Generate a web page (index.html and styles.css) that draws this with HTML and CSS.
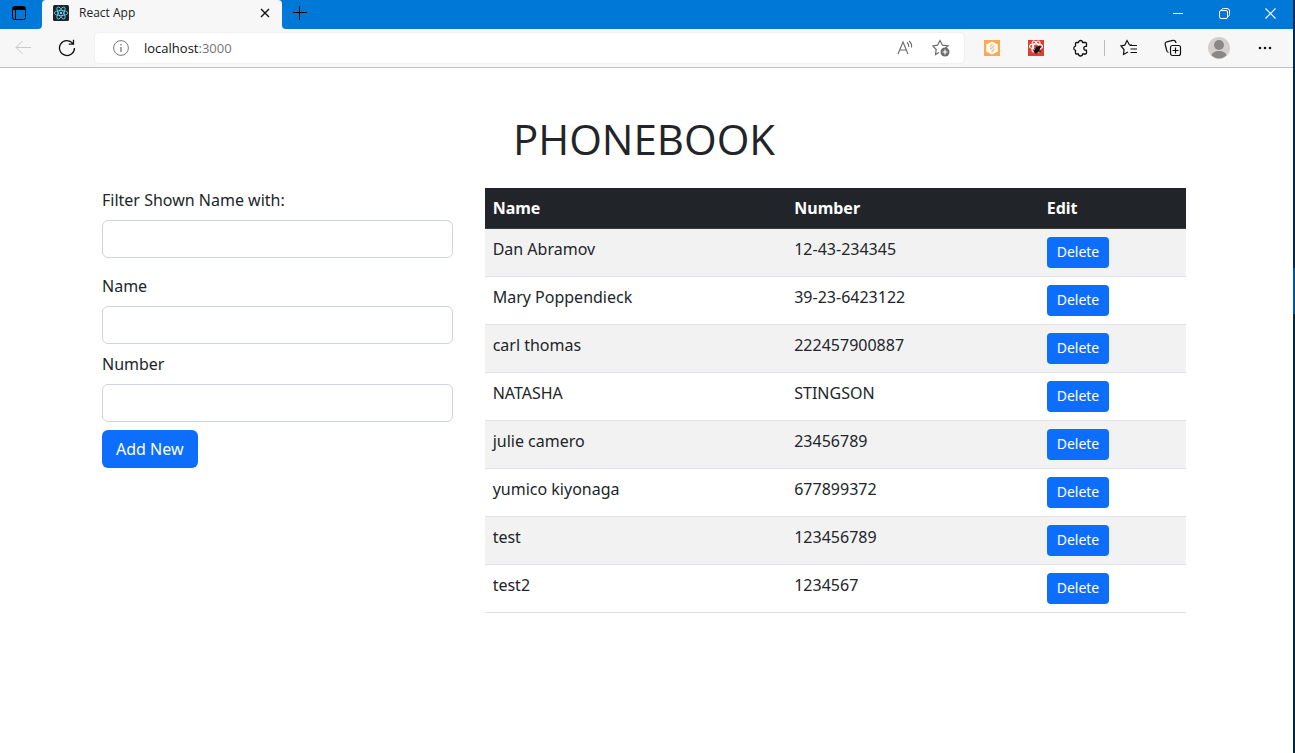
FILE: index.html
```html
<!DOCTYPE html>
<html lang="en">
<head>
<meta charset="utf-8">
<title>React App</title>
<link rel="stylesheet" href="styles.css">
</head>
<body>
<div class="window">
  <header class="titlebar">
    <button class="tab-menu" aria-label="Tab actions">
      <svg width="16" height="16" viewBox="0 0 16 16" fill="none" stroke="#000"><rect x="1.500" y="1.500" width="13" height="13" rx="2"/><path d="M1.500 4.500h13M4.500 4.500v10"/><path d="M2 3h12" stroke-width="2"/></svg>
    </button>
    <div class="tab">
      <svg width="16" height="16" viewBox="0 0 16 16" fill="none" stroke="#61dafb" stroke-width=".8"><rect width="16" height="16" rx="1.500" fill="#20232a" stroke="none"/><ellipse cx="8" cy="8" rx="6.800" ry="2.600"/><ellipse cx="8" cy="8" rx="6.800" ry="2.600" transform="rotate(60 8 8)"/><ellipse cx="8" cy="8" rx="6.800" ry="2.600" transform="rotate(120 8 8)"/><circle cx="8" cy="8" r="1.200" fill="#61dafb" stroke="none"/></svg>
      <span class="tab-title">React App</span>
      <button class="tab-close" aria-label="Close tab">
        <svg width="10" height="10" viewBox="0 0 10 10" stroke="#111" stroke-width="1.400"><path d="M1 1l8 8M9 1l-8 8"/></svg>
      </button>
    </div>
    <button class="tab-new" aria-label="New tab">
      <svg width="14" height="14" viewBox="0 0 14 14" stroke="#000"><path d="M0 6.500h14M6.500 0v14"/></svg>
    </button>
    <div class="window-controls">
      <button aria-label="Minimize"><svg width="10" height="10" viewBox="0 0 10 10" stroke="#fff"><path d="M0 5.500h10"/></svg></button>
      <button aria-label="Restore"><svg width="11" height="11" viewBox="0 0 11 11" fill="none" stroke="#fff"><rect x=".5" y="2.500" width="8" height="8" rx="1.500"/><path d="M2.500 2.500v-.5q.3-1.500 2-1.500h3.500q2.500 0 2.500 2.500v3.500q0 1.700-1.500 2h-.5"/></svg></button>
      <button aria-label="Close"><svg width="11" height="11" viewBox="0 0 11 11" stroke="#fff" stroke-width="1.200"><path d="M.5.5l10 10M10.500.5l-10 10"/></svg></button>
    </div>
  </header>

  <nav class="toolbar">
    <button class="tool" aria-label="Back"><svg width="18" height="18" viewBox="0 0 18 18" fill="none" stroke="#c9c9c9"><path d="M17 8.500H2M8.500 2L2 8.500 8.500 15"/></svg></button>
    <button class="tool" aria-label="Refresh"><svg width="18" height="18" viewBox="0 0 18 18" fill="none" stroke="#111" stroke-width="1.300"><path d="M16.500 9A7.500 7.500 0 1 1 14.800 4.300M15.500.8v4.400h-4.700"/></svg></button>
    <div class="address">
      <svg width="16" height="16" viewBox="0 0 16 16" fill="none" stroke="#767676"><circle cx="8" cy="8" r="7.400"/><path d="M8 7v5M8 4v1.500" stroke-width="1.300"/></svg>
      <div class="url">localhost<span class="port">:3000</span></div>
      <button class="address-tool" aria-label="Read aloud"><svg width="18" height="16" viewBox="0 0 18 16" fill="none" stroke="#6b6b6b" stroke-width="1.100"><path d="M2 14L7 2l5 12M4 10h6"/><path d="M11 2.500q2 1.500 1.800 4.500M13 1q3.200 2.500 2.500 6.500"/></svg></button>
      <button class="address-tool" aria-label="Add to favorites"><svg width="18" height="18" viewBox="0 0 18 18" fill="none" stroke="#6b6b6b" stroke-width="1.200"><path d="M7 13.500L3.500 15.500 4.200 10.500.8 7 5.500 6.200 8 1.500 10.500 6.200 16 7 13.500 9"/><circle cx="13" cy="13" r="4.500" fill="#6b6b6b" stroke="none"/><path d="M10.500 13h5M13 10.500v5" stroke="#fff"/></svg></button>
    </div>
    <button class="tool" aria-label="Orange extension"><svg width="16" height="16" viewBox="0 0 16 16"><rect width="16" height="16" fill="#ffa850"/><path d="M8 1.500l5.800 3v7L8 14.500l-5.800-3v-7z" fill="#fff"/><path d="M8.500 4L6 7M10.500 5.500L6 9.500M10.500 8.500L7.500 12" fill="none" stroke="#ffbd78" stroke-width="1.300"/></svg></button>
    <button class="tool" aria-label="React developer tools"><svg width="16" height="16" viewBox="0 0 16 16"><rect width="16" height="16" fill="#dc4035"/><g fill="none" stroke="#fff" stroke-width="1.100"><ellipse cx="8" cy="6.500" rx="6.500" ry="2.600"/><ellipse cx="8" cy="6.500" rx="6" ry="2.600" transform="rotate(60 8 6.500)"/><ellipse cx="8" cy="6.500" rx="6" ry="2.600" transform="rotate(120 8 6.500)"/></g><ellipse cx="9" cy="10" rx="2.300" ry="3.700" fill="#1d1010" transform="rotate(35 9 10)"/><circle cx="11.300" cy="7" r="1.500" fill="#1d1010"/><path d="M6 8.500l7 3.500M6 11h7M9 6.500l-1 7" stroke="#1d1010" stroke-width=".9"/></svg></button>
    <button class="tool" aria-label="Extensions"><svg width="18" height="18" viewBox="0 0 18 18" fill="none" stroke="#111" stroke-width="1.300"><path d="M5.500 3.500h2a2 2 0 0 1 4 0h3q1 0 1 1v2.800h-.8a1.900 1.900 0 0 0 0 3.800h.8v2.900q0 1-1 1h-3a2 2 0 0 1-4 0h-2q-1 0-1-1v-2.600a2.200 2.200 0 0 1 0-4.300V4.500q0-1 1-1z" stroke-linejoin="round"/></svg></button>
    <span class="separator"></span>
    <button class="tool" aria-label="Favorites"><svg width="18" height="18" viewBox="0 0 18 18" fill="none" stroke="#111" stroke-width="1.200"><path d="M12 6H9.500L7 1.500 4.700 6.200 1 7 4 10.500 3.500 15.500 8 13M10 6.500h7M10.500 10H17M10.500 13.500H17"/></svg></button>
    <button class="tool" aria-label="Collections"><svg width="18" height="18" viewBox="0 0 18 18" fill="none" stroke="#111" stroke-width="1.200"><rect x="6.500" y="6.500" width="10" height="10" rx="2"/><path d="M11.500 8.500v6M8.500 11.500h6M4.500 13.500Q3 13 2.700 11.500L1.200 5.500Q.8 3.500 2.700 2.800L9 1.300Q11.500 1 12 4"/></svg></button>
    <button class="tool profile" aria-label="Profile"><svg width="22" height="22" viewBox="0 0 22 22"><circle cx="11" cy="11" r="11" fill="#d2d0ce"/><circle cx="11" cy="8" r="5" fill="#8a8886"/><path d="M3.500 18.500q1-4.500 7.500-4.500t7.500 4.500q-7.500 6-15 0z" fill="#8a8886"/></svg></button>
    <button class="tool more" aria-label="Settings and more"><svg width="14" height="4" viewBox="0 0 14 4" fill="#111"><circle cx="2" cy="2" r="1.300"/><circle cx="7" cy="2" r="1.300"/><circle cx="12" cy="2" r="1.300"/></svg></button>
  </nav>

  <main class="page">
    <h1>PHONEBOOK</h1>
    <div class="columns">
      <div class="forms">
        <div class="field">
          <label for="filter">Filter Shown Name with:</label>
          <input id="filter" type="text">
        </div>
        <form class="entry">
          <div class="field">
            <label for="name">Name</label>
            <input id="name" type="text">
          </div>
          <div class="field">
            <label for="number">Number</label>
            <input id="number" type="text">
          </div>
          <button class="button" type="submit">Add New</button>
        </form>
      </div>
      <table class="contacts">
        <thead><tr><th class="col-name">Name</th><th class="col-number">Number</th><th>Edit</th></tr></thead>
        <tbody>
          <tr><td>Dan Abramov</td><td>12-43-234345</td><td><button class="button small">Delete</button></td></tr>
          <tr><td>Mary Poppendieck</td><td>39-23-6423122</td><td><button class="button small">Delete</button></td></tr>
          <tr><td>carl thomas</td><td>222457900887</td><td><button class="button small">Delete</button></td></tr>
          <tr><td>NATASHA</td><td>STINGSON</td><td><button class="button small">Delete</button></td></tr>
          <tr><td>julie camero</td><td>23456789</td><td><button class="button small">Delete</button></td></tr>
          <tr><td>yumico kiyonaga</td><td>677899372</td><td><button class="button small">Delete</button></td></tr>
          <tr><td>test</td><td>123456789</td><td><button class="button small">Delete</button></td></tr>
          <tr><td>test2</td><td>1234567</td><td><button class="button small">Delete</button></td></tr>
        </tbody>
      </table>
    </div>
  </main>
</div>
</body>
</html>
```
FILE: styles.css
```css
* { box-sizing: border-box; }

body {
  margin: 0;
  color: #212529;
  background: linear-gradient(#00294f 0 268px, #00549c 268px 314px, #002747 314px);
  font: 16px/24px "Open Sans", "Noto Sans", sans-serif;
}

button { border: 0; padding: 0; background: none; font: inherit; }
svg { display: block; }

.window {
  min-height: 100vh;
  margin-right: 2px;
  background: #fff;
}

/* Browser frame */
.titlebar {
  display: flex;
  height: 29px;
  background: linear-gradient(#0078d7 0 24px, #f7f7f7 24px);
}
.tab-menu {
  display: flex;
  width: 42px;
  align-items: center;
  justify-content: center;
  padding: 0 4px 3px 0;
  border-bottom-right-radius: 4px;
  background: #0078d7;
}
.tab {
  display: flex;
  width: 240px;
  align-items: center;
  gap: 10px;
  padding: 0 12px 3px 11px;
  border-radius: 4px 4px 0 0;
  background: #f7f7f7;
  font-size: 12px;
}
.tab-title { flex: 1; color: #222; }
.tab-new {
  padding: 0 0 3px 11px;
  border-bottom-left-radius: 4px;
  background: #0078d7;
}
.window-controls {
  display: flex;
  flex: 1;
  justify-content: flex-end;
  background: #0078d7;
}
.window-controls button {
  display: flex;
  width: 46px;
  align-items: center;
  justify-content: center;
  padding-bottom: 3px;
}

.toolbar {
  display: flex;
  height: 39px;
  align-items: center;
  padding: 0 6px 0 1px;
  border-bottom: 1px solid #c0c0c0;
  background: #f7f7f7;
}
.tool {
  display: flex;
  width: 44px;
  height: 32px;
  align-items: center;
  justify-content: center;
}
.profile, .more { margin-left: 2px; }
.address {
  display: flex;
  flex: 1;
  height: 30px;
  align-items: center;
  margin: 0 6px;
  padding: 0 14px 0 18px;
  border-radius: 4px;
  background: #fff;
  box-shadow: 0 0 2px #ddd;
}
.url {
  flex: 1;
  margin-left: 15px;
  color: #111;
  font-size: 13px;
}
.port { color: #767676; }
.address-tool { margin-left: 18px; }
.separator {
  width: 1px;
  height: 16px;
  margin: 0 2px;
  background: #bbb;
}

/* Phonebook */
.page {
  padding: 48px 107px 48px 102px;
  font-family: "Noto Sans", "Open Sans", sans-serif;
}
h1 {
  margin: 0 0 24px;
  padding-bottom: 2px;
  font-family: "Open Sans", "Noto Sans", sans-serif;
  font-size: 42px;
  font-weight: 400;
  line-height: 46px;
  text-align: center;
}
.columns {
  display: grid;
  grid-template-columns: 1fr 2fr;
  align-items: start;
  gap: 32px;
}
.forms { display: grid; gap: 16px; }
.entry {
  display: grid;
  justify-items: start;
  gap: 8px;
}
.field {
  display: grid;
  width: 100%;
  gap: 8px;
}
.field input {
  width: 100%;
  height: 38px;
  padding: 6px 12px;
  border: 1px solid #ced4da;
  border-radius: 6px;
  background: #fff;
  color: inherit;
  font: inherit;
}
.button {
  padding: 7px 14px;
  border-radius: 6px;
  background: #0d6efd;
  color: #fff;
}
.small {
  display: block;
  padding: 4px 10px 6px;
  border-radius: 4px;
  font-size: 14px;
  line-height: 21px;
}
.contacts {
  width: 100%;
  border-collapse: separate;
  border-spacing: 0;
  table-layout: fixed;
}
.contacts th, .contacts td {
  padding: 8px;
  border-bottom: 1px solid #dee2e6;
  text-align: left;
  vertical-align: top;
}
.contacts th {
  border-color: #373b3e;
  background: #212529;
  color: #fff;
  font-weight: 700;
}
.contacts tbody tr:nth-child(odd) { background: #f2f2f2; }
.col-name { width: 43%; }
.col-number { width: 36%; }
```
